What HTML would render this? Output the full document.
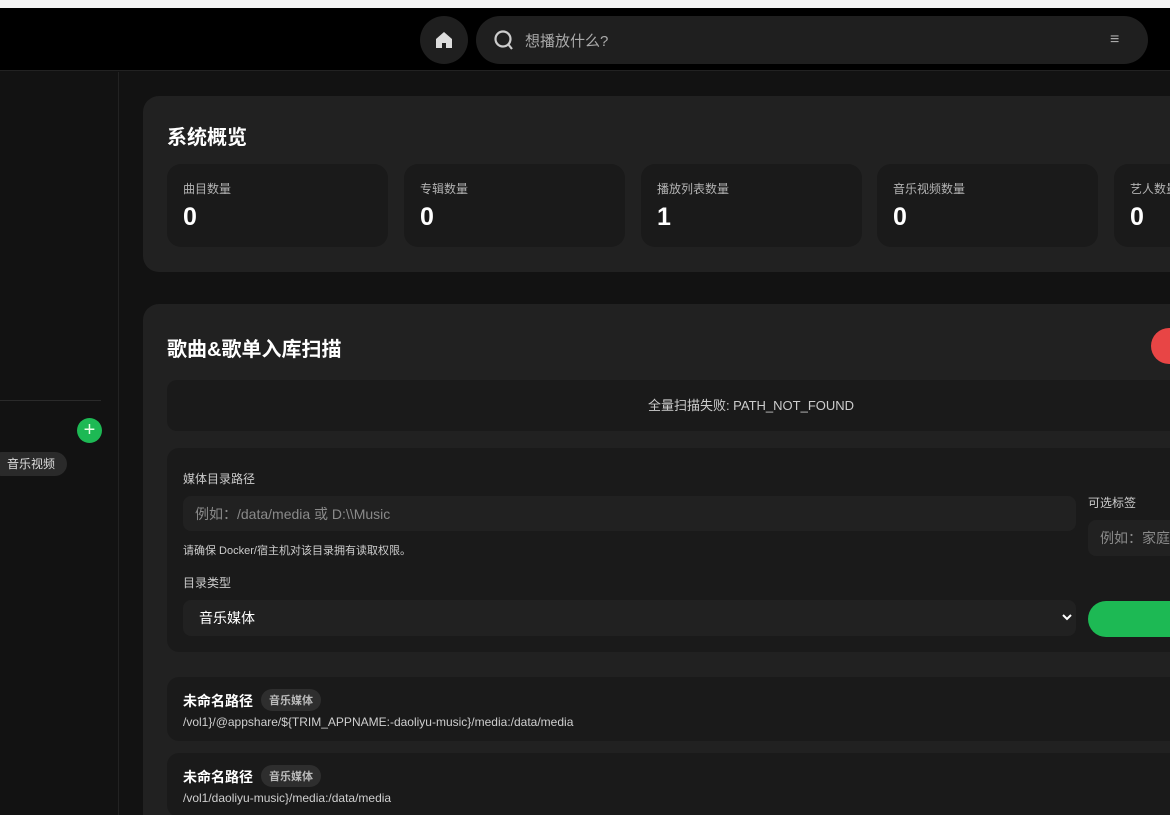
<!DOCTYPE html>
<html style="overflow:hidden;width:1170px;height:815px"><head><meta charset="utf-8"><style>
*{box-sizing:border-box;margin:0;padding:0}
body{width:1170px;height:815px;overflow:hidden;background:#121212;font-family:"Liberation Sans","Noto Sans CJK SC",sans-serif;color:#fff;position:relative}
.abs{position:absolute}
.top{left:0;top:0;width:1170px;height:8px;background:#f5f5f5}
.hdr{left:0;top:8px;width:1170px;height:63px;background:#000;border-bottom:1px solid #222}
.side{left:0;top:72px;width:119px;height:743px;background:#121212;border-right:1px solid #222}
.panel{background:#212121;border-radius:16px}
.stat{background:#1a1a1a;border-radius:14px;width:221px;height:83px;top:164px}
.stat .l{position:absolute;left:16px;top:16px;font-size:12px;color:#b3b3b3}
.stat .v{position:absolute;left:16px;top:39px;font-size:25px;font-weight:bold}
.inp{background:#212121;border-radius:8px;color:#8a8a8a;font-size:14px;padding-left:12px;display:flex;align-items:center}
.item{left:167px;width:1100px;height:64px;background:#1a1a1a;border-radius:12px}
.item b{position:absolute;left:16px;top:14px;font-size:14px}
.item .tag{position:absolute;left:94px;top:12px;background:#2e2e2e;border-radius:12px;font-size:11px;color:#bbb;padding:3px 8px;font-weight:bold}
.item .p{position:absolute;left:16px;top:38px;font-size:12px;color:#cfcfcf}
</style></head><body>
<div class="abs top"></div>
<div class="abs hdr">
 <div class="abs" style="left:420px;top:8px;width:48px;height:48px;border-radius:50%;background:#1f1f1f"></div>
 <svg class="abs" style="left:434px;top:23px" width="20" height="18" viewBox="0 0 20 18"><path d="M10 1 L2 8 V17 H8 V12 H12 V17 H18 V8 Z" fill="#ddd"/></svg>
 <div class="abs" style="left:476px;top:8px;width:672px;height:48px;border-radius:24px;background:#1f1f1f"></div>
 <svg class="abs" style="left:493px;top:21px" width="22" height="22" viewBox="0 0 22 22"><circle cx="10" cy="10" r="7.5" stroke="#ccc" stroke-width="2.2" fill="none"/><path d="M15 15 L19 20" stroke="#ccc" stroke-width="2.2"/></svg>
 <div class="abs" style="left:525px;top:22px;font-size:15px;color:#aaa">想播放什么?</div>
 <div class="abs" style="left:1110px;top:23px;font-size:16px;color:#aaa">≡</div>
</div>
<div class="abs side">
 <div class="abs" style="left:0;top:328px;width:101px;height:1px;background:#2a2a2a"></div>
 <div class="abs" style="left:77px;top:346px;width:25px;height:25px;border-radius:50%;background:#1db954;color:#e8ffe8;font-size:20px;line-height:24px;text-align:center">+</div>
 <div class="abs" style="left:-10px;top:380px;width:77px;height:24px;border-radius:12px;background:#2a2a2a;font-size:12px;color:#ddd;line-height:24px;padding-left:17px">音乐视频</div>
</div>
<div class="abs panel" style="left:143px;top:96px;width:1200px;height:176px"></div>
<div class="abs" style="left:167px;top:121px;font-size:20px;font-weight:bold">系统概览</div>
<div class="abs stat" style="left:167px"><div class="l">曲目数量</div><div class="v">0</div></div>
<div class="abs stat" style="left:404px"><div class="l">专辑数量</div><div class="v">0</div></div>
<div class="abs stat" style="left:641px"><div class="l">播放列表数量</div><div class="v">1</div></div>
<div class="abs stat" style="left:877px"><div class="l">音乐视频数量</div><div class="v">0</div></div>
<div class="abs stat" style="left:1114px"><div class="l">艺人数量</div><div class="v">0</div></div>
<div class="abs panel" style="left:143px;top:304px;width:1200px;height:511px;border-bottom-left-radius:0;border-bottom-right-radius:0"></div>
<div class="abs" style="left:167px;top:333px;font-size:20px;font-weight:bold">歌曲&amp;歌单入库扫描</div>
<div class="abs" style="left:1151px;top:328px;width:50px;height:36px;border-radius:18px;background:#e84545"></div>
<div class="abs" style="left:167px;top:380px;width:1168px;height:51px;background:#1a1a1a;border-radius:10px;text-align:center;line-height:51px;font-size:13px;color:#ccc">全量扫描失败: PATH_NOT_FOUND</div>
<div class="abs" style="left:167px;top:448px;width:1100px;height:204px;background:#1a1a1a;border-radius:12px"></div>
<div class="abs" style="left:183px;top:470px;font-size:12px;color:#ccc">媒体目录路径</div>
<div class="abs inp" style="left:183px;top:496px;width:893px;height:35px">例如：/data/media 或 D:\\Music</div>
<div class="abs" style="left:183px;top:542px;font-size:11px;color:#ccc">请确保 Docker/宿主机对该目录拥有读取权限。</div>
<div class="abs" style="left:183px;top:574px;font-size:12px;color:#ccc">目录类型</div>
<div class="abs inp" style="left:183px;top:600px;width:893px;height:36px;color:#fff;padding-left:16px">音乐媒体</div>
<svg class="abs" style="left:1062px;top:613px" width="10" height="8" viewBox="0 0 10 8"><path d="M1 2 L5 6 L9 2" stroke="#fff" stroke-width="2" fill="none"/></svg>
<div class="abs" style="left:1088px;top:494px;font-size:12px;color:#ccc">可选标签</div>
<div class="abs inp" style="left:1088px;top:520px;width:120px;height:36px">例如：家庭</div>
<div class="abs" style="left:1088px;top:601px;width:150px;height:36px;border-radius:18px;background:#1db954"></div>
<div class="abs item" style="top:677px"><b>未命名路径</b><span class="tag">音乐媒体</span><div class="p">/vol1}/@appshare/${TRIM_APPNAME:-daoliyu-music}/media:/data/media</div></div>
<div class="abs item" style="top:753px"><b>未命名路径</b><span class="tag">音乐媒体</span><div class="p">/vol1/daoliyu-music}/media:/data/media</div></div>
</body></html>
